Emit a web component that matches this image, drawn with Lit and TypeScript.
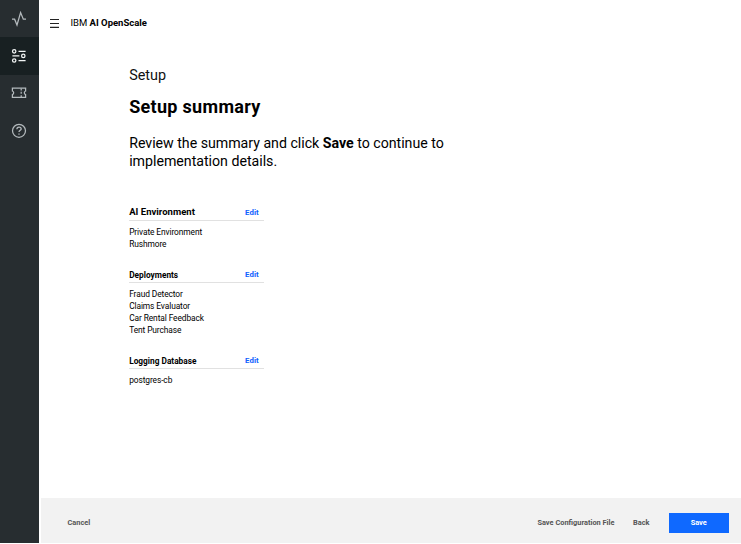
import { LitElement, html, svg, css } from "lit";

const sections = [
  { title: "AI Environment", large: true, items: ["Private Environment", "Rushmore"] },
  { title: "Deployments", large: false, items: ["Fraud Detector", "Claims Evaluator", "Car Rental Feedback", "Tent Purchase"] },
  { title: "Logging Database", large: false, items: ["postgres-cb"] },
];

const icons = [
  svg`<path d="M1 8.2H3.6L6 14L9.6 1.6L12.3 8.2H15"/>`,
  svg`<circle cx="3.2" cy="3.3" r="1.7"/><path d="M7.5 3.3H14.6M1.4 7.9H8.4M7.5 12.5H14.6"/><circle cx="12.3" cy="7.9" r="1.7"/><circle cx="3.2" cy="12.5" r="1.7"/>`,
  svg`<path d="M1.4 3.2H14.6V6A1.9 1.9 0 0 0 14.6 9.6V12.4H1.4V9.6A1.9 1.9 0 0 0 1.4 6Z"/><path d="M10.2 3.6V5.4M10.2 6.8V8.8M10.2 10.2V12"/>`,
  svg`<circle cx="8" cy="7.8" r="6.5"/><path d="M5.9 6.3C5.9 4.7 6.8 4.1 8 4.1S10.2 4.8 10.2 6C10.2 7.4 8 7.3 8 9.1"/><path d="M8 10.4V11.8"/>`,
];

class AppRoot extends LitElement {
  static styles = css`
    :host { display: flex; height: 543px; background: #fff; color: #111; font-family: Roboto, sans-serif; }
    * { box-sizing: border-box; }
    nav { width: 38.7px; flex: none; background: #272d30; }
    .nav-item { height: 37.4px; display: flex; align-items: center; justify-content: center; color: #b4babd; }
    .nav-item.active { background: #182022; color: #f2f5f5; }
    .nav-item svg { width: 16px; height: 16px; fill: none; stroke: currentColor; stroke-width: 1.25; }
    .page { flex: 1; display: flex; flex-direction: column; min-width: 0; }
    header { height: 46px; display: flex; align-items: center; padding: 0 0 1px 11.3px; font-size: 9.5px; }
    .menu { width: 9px; height: 10px; margin: 1px 11.5px 0 0; stroke: #222; stroke-width: 1.2; }
    .brand { white-space: pre; color: #000; letter-spacing: -.01px; }
    b, h1, h2 { font-weight: 700; }
    main { flex: 1; padding: 21px 0 0 90.5px; }
    .crumb { font-size: 14.4px; line-height: 18px; }
    h1 { margin: 11px 0 0; font-size: 18px; line-height: 22px; letter-spacing: .3px; color: #000; }
    .intro { margin: 16px 0 0; font-size: 14.2px; line-height: 18px; letter-spacing: -.02px; color: #000; }
    .sections { width: 134.5px; padding-top: 34px; }
    section { margin-bottom: 16px; }
    .head { height: 17px; display: flex; align-items: center; justify-content: space-between; padding-right: 5px; border-bottom: 1px solid #e1e1e1; }
    h2 { margin: 0; padding-top: 2px; font-size: 8.3px; line-height: 12px; letter-spacing: 0; color: #000; }
    h2.large { padding-top: 0; font-size: 9.5px; letter-spacing: .02px; }
    .edit { padding-top: 2px; font-size: 7.8px; line-height: 12px; font-weight: 700; letter-spacing: .04px; color: #0f62fe; }
    .items { padding-top: 5px; font-size: 8.4px; line-height: 12px; letter-spacing: -.1px; color: #000; }
    footer { height: 45px; margin-left: 2.3px; padding: 5px 12px 0 26.5px; display: flex; align-items: center; background: #f2f2f2; font-size: 7.4px; font-weight: 700; color: #565656; }
    .action { padding-bottom: 1px; }
    .spacer { flex: 1; }
    .back { margin: 0 19px 0 18.5px; }
    .save { width: 60.5px; height: 20px; display: flex; align-items: center; justify-content: center; padding-bottom: 1px; background: #0f69ff; color: #fff; }
  `;

  render() {
    return html`
      <nav>${icons.map((icon, i) => html`<div class="nav-item ${i === 1 ? "active" : ""}"><svg viewBox="0 0 16 16">${icon}</svg></div>`)}</nav>
      <div class="page">
        <header>
          <svg class="menu" viewBox="0 0 9 10"><path d="M0 1.5H9M0 5.5H9M0 9.4H9"/></svg>
          <span class="brand">IBM <b>AI OpenScale</b></span>
        </header>
        <main>
          <div class="crumb">Setup</div>
          <h1>Setup summary</h1>
          <p class="intro">Review the summary and click <b>Save</b> to continue to<br>implementation details.</p>
          <div class="sections">
            ${sections.map((s) => html`<section>
              <div class="head"><h2 class=${s.large ? "large" : ""}>${s.title}</h2><span class="edit">Edit</span></div>
              <div class="items">${s.items.map((t) => html`<div>${t}</div>`)}</div>
            </section>`)}
          </div>
        </main>
        <footer>
          <span class="action">Cancel</span><span class="spacer"></span>
          <span class="action">Save Configuration File</span><span class="action back">Back</span><span class="save">Save</span>
        </footer>
      </div>`;
  }
}
customElements.define("app-root", AppRoot);
